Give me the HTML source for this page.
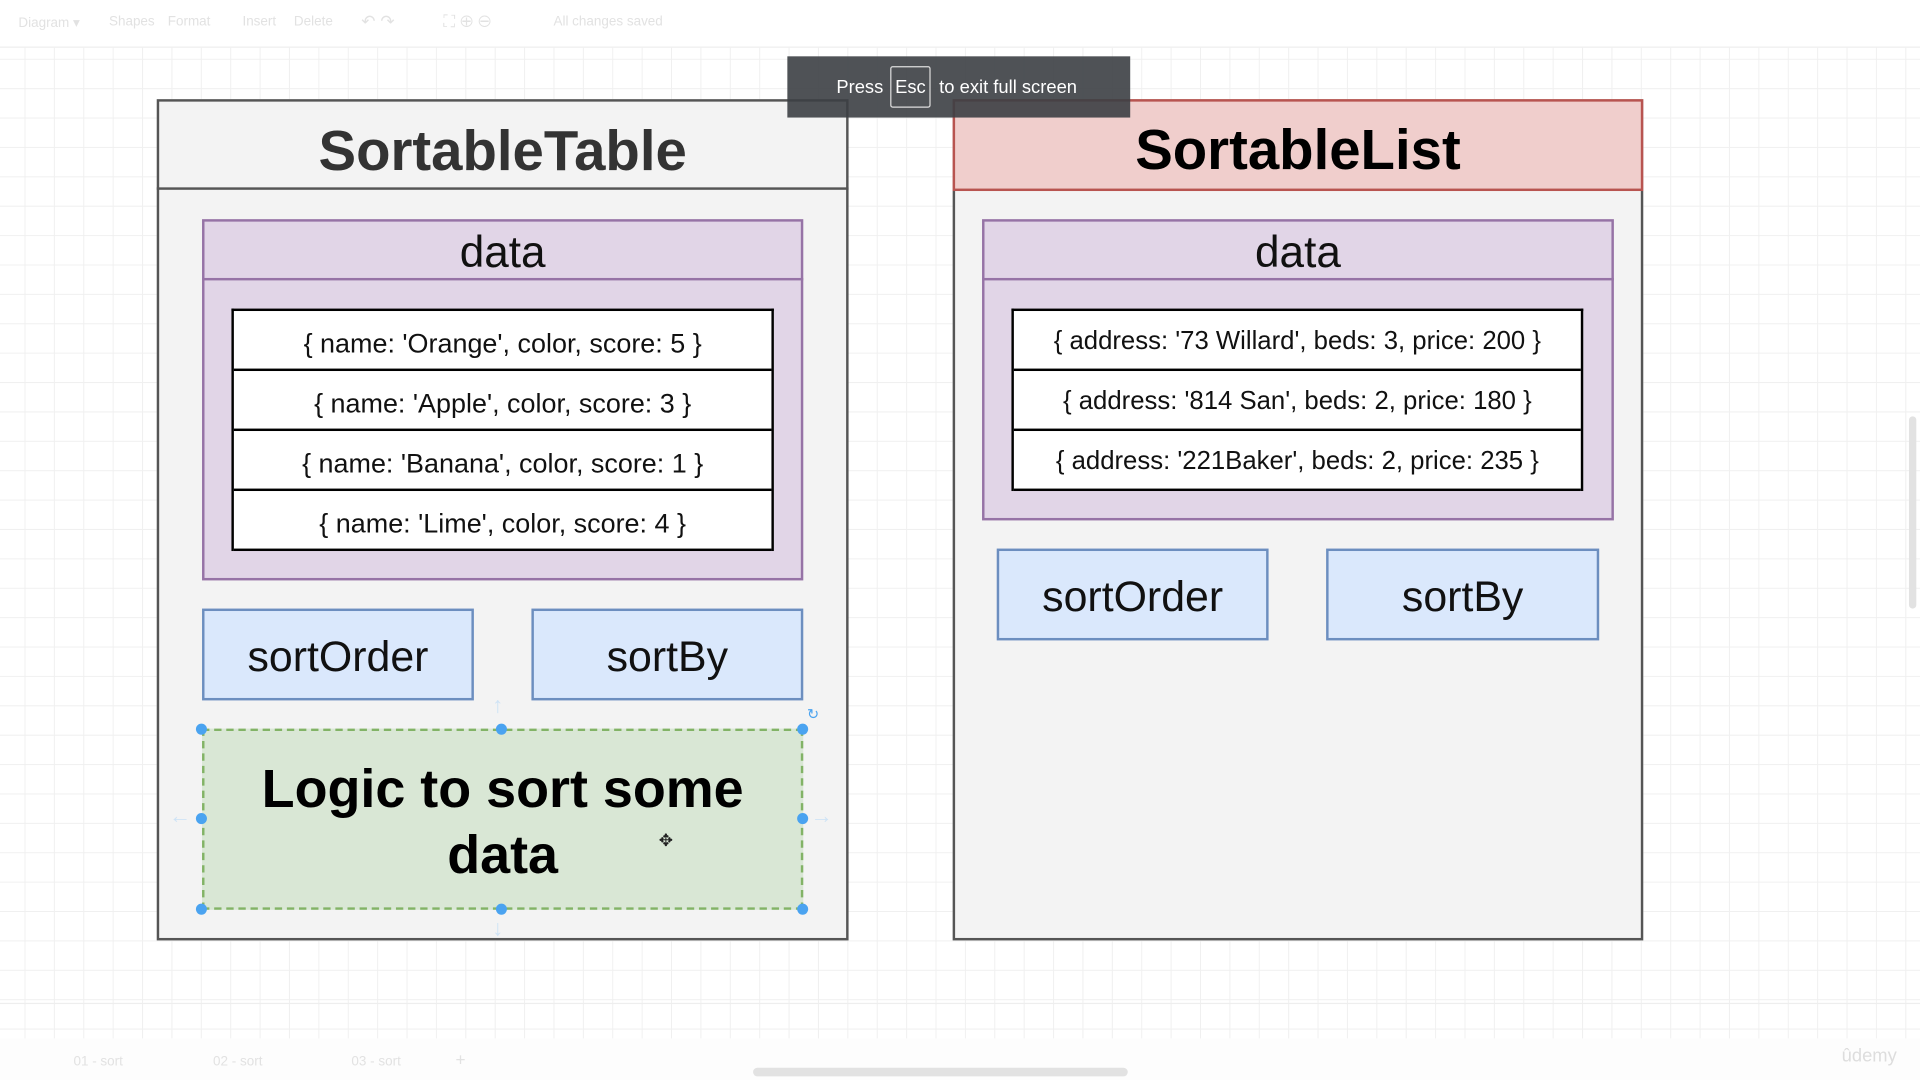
<!DOCTYPE html>
<html><head><meta charset="utf-8"><style>
*{margin:0;padding:0;box-sizing:border-box}
html,body{width:1920px;height:1080px;overflow:hidden;background:#fff}
#s{position:absolute;left:0;top:0;width:1568px;height:882px;transform:scale(1.22449);transform-origin:0 0;font-family:"Liberation Sans",Arial,sans-serif;
background-color:#fff;background-image:linear-gradient(#f0f0f0 1px,transparent 1px),linear-gradient(90deg,#f0f0f0 1px,transparent 1px);background-size:24px 24px;background-position:-4px 0}
.a{position:absolute}
.c{display:flex;align-items:center;justify-content:center;text-align:center}
.tb{color:#e2e2e2;font-size:11px;top:12px}
.row{position:absolute;left:0;right:0;height:49px;border-bottom:2px solid #000;font-size:22px;color:#111;display:flex;align-items:center;justify-content:center;padding-top:6px}
.h{width:9px;height:9px;border-radius:50%;background:#4aa3f0;position:absolute}
</style></head><body><div id="s">
<div class="a" style="left:0;top:0;width:1568px;height:39px;background:#fff;border-bottom:1px solid #eee"></div>
<div class="a tb" style="left:15px">Diagram ▾</div>
<div class="a tb" style="left:89px">Shapes</div>
<div class="a tb" style="left:137px">Format</div>
<div class="a tb" style="left:198px">Insert</div>
<div class="a tb" style="left:240px">Delete</div>
<div class="a tb" style="left:295px;font-size:14px;top:9px">↶ ↷</div>
<div class="a tb" style="left:362px;font-size:14px;top:9px">⛶ ⊕ ⊖</div>
<div class="a tb" style="left:452px">All changes saved</div>

<!-- left -->
<div class="a" style="left:128px;top:81px;width:565px;height:687px;background:#f3f3f3;border:2px solid #555"></div>
<div class="a c" style="left:128px;top:85px;width:565px;height:70px;font-size:46px;font-weight:bold;color:#333;padding-top:6px">SortableTable</div>
<div class="a" style="left:128px;top:153px;width:565px;height:2px;background:#555"></div>
<div class="a" style="left:165px;top:179px;width:491px;height:295px;background:#e1d5e7;border:2px solid #9673a6"></div>
<div class="a c" style="left:165px;top:179px;width:491px;height:50px;border-bottom:2px solid #9673a6;font-size:36px;color:#111;padding-top:5px">data</div>
<div class="a" style="left:189px;top:252px;width:443px;height:198px;background:#fff;border:2px solid #000;border-bottom:none">
<div class="row" style="top:0">{ name: 'Orange', color, score: 5 }</div>
<div class="row" style="top:49px">{ name: 'Apple', color, score: 3 }</div>
<div class="row" style="top:98px">{ name: 'Banana', color, score: 1 }</div>
<div class="row" style="top:147px">{ name: 'Lime', color, score: 4 }</div>
</div>
<div class="a c" style="left:165px;top:497px;width:222px;height:75px;background:#dae8fc;border:2px solid #6c8ebf;font-size:35px;color:#111;padding-top:4px">sortOrder</div>
<div class="a c" style="left:434px;top:497px;width:222px;height:75px;background:#dae8fc;border:2px solid #6c8ebf;font-size:35px;color:#111;padding-top:4px">sortBy</div>
<div class="a c" style="left:165px;top:595px;width:491px;height:148px;background:#d9e7d5;border:2px dashed #82b366;font-size:44px;font-weight:bold;line-height:54px;color:#000;padding-top:6px">Logic to sort some<br>data</div>
<div class="h" style="left:160px;top:591px"></div><div class="h" style="left:405px;top:591px"></div><div class="h" style="left:651px;top:591px"></div>
<div class="h" style="left:160px;top:664px"></div><div class="h" style="left:651px;top:664px"></div>
<div class="h" style="left:160px;top:738px"></div><div class="h" style="left:405px;top:738px"></div><div class="h" style="left:651px;top:738px"></div>
<div class="a" style="left:402px;top:566px;color:#cfe3f5;font-size:18px">↑</div>
<div class="a" style="left:402px;top:748px;color:#cfe3f5;font-size:18px">↓</div>
<div class="a" style="left:138px;top:656px;color:#cfe3f5;font-size:18px">←</div>
<div class="a" style="left:662px;top:656px;color:#cfe3f5;font-size:18px">→</div>
<div class="a" style="left:659px;top:576px;color:#4aa3f0;font-size:12px">↻</div>
<div class="a" style="left:538px;top:678px;font-size:14px;color:#222">✥</div>

<!-- right -->
<div class="a" style="left:778px;top:81px;width:564px;height:687px;background:#f3f3f3;border:2px solid #555"></div>
<div class="a c" style="left:778px;top:81px;width:564px;height:75px;background:#f0cecc;border:2px solid #b85450;font-size:46px;font-weight:bold;color:#000;padding-top:6px">SortableList</div>
<div class="a" style="left:802px;top:179px;width:516px;height:246px;background:#e1d5e7;border:2px solid #9673a6"></div>
<div class="a c" style="left:802px;top:179px;width:516px;height:50px;border-bottom:2px solid #9673a6;font-size:36px;color:#111;padding-top:5px">data</div>
<div class="a" style="left:826px;top:252px;width:467px;height:149px;background:#fff;border:2px solid #000;border-bottom:none">
<div class="row" style="top:0;font-size:21px;padding-top:3px">{ address: '73 Willard', beds: 3, price: 200 }</div>
<div class="row" style="top:49px;font-size:21px;padding-top:3px">{ address: '814 San', beds: 2, price: 180 }</div>
<div class="row" style="top:98px;font-size:21px;padding-top:3px">{ address: '221Baker', beds: 2, price: 235 }</div>
</div>
<div class="a c" style="left:814px;top:448px;width:222px;height:75px;background:#dae8fc;border:2px solid #6c8ebf;font-size:35px;color:#111;padding-top:4px">sortOrder</div>
<div class="a c" style="left:1083px;top:448px;width:223px;height:75px;background:#dae8fc;border:2px solid #6c8ebf;font-size:35px;color:#111;padding-top:4px">sortBy</div>

<!-- overlay -->
<div class="a" style="left:643px;top:46px;width:280px;height:50px;background:rgba(60,63,68,0.9);color:#fff;font-size:15px">
<span class="a" style="left:40px;top:17px">Press</span>
<span class="a c" style="left:84px;top:8px;width:33px;height:34px;border:1px solid #ddd;border-radius:2px">Esc</span>
<span class="a" style="left:124px;top:17px">to exit full screen</span>
</div>

<!-- bottom -->
<div class="a" style="left:0;top:819px;width:1568px;height:1px;background:#eee"></div>
<div class="a" style="left:0;top:848px;width:1568px;height:34px;background:#fdfdfd"></div>
<div class="a tb" style="left:60px;top:861px">01 - sort</div>
<div class="a tb" style="left:174px;top:861px">02 - sort</div>
<div class="a tb" style="left:287px;top:861px">03 - sort</div>
<div class="a tb" style="left:372px;top:857px;font-size:14px">+</div>
<div class="a" style="left:615px;top:872px;width:306px;height:7px;background:#e2e2e2;border-radius:4px"></div>
<div class="a" style="left:1559px;top:340px;width:6px;height:157px;background:#e2e2e2;border-radius:3px"></div>
<div class="a" style="left:1504px;top:854px;color:#ddd;font-size:15px">ûdemy</div>
</div></body></html>
